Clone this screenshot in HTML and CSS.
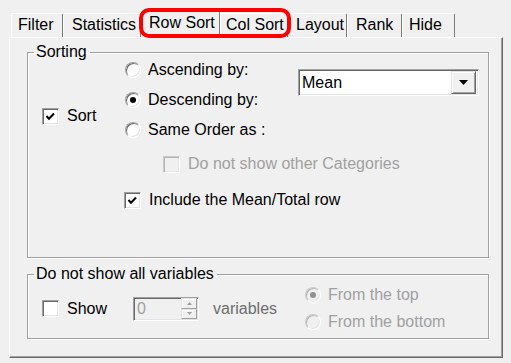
FILE: index.html
```html
<!DOCTYPE html>
<html lang="en">
<head>
    <meta charset="UTF-8">
    <title>Row Sort</title>
    <link rel="stylesheet" href="styles.css">
</head>
<body>
    <div class="dialog">
        <div class="tabs">
            <div class="tab tab-filter">Filter</div>
            <div class="tab tab-stats">Statistics</div>
            <div class="tab tab-row selected">Row Sort</div>
            <div class="tab tab-col">Col Sort</div>
            <div class="tab tab-layout">Layout</div>
            <div class="tab tab-rank">Rank</div>
            <div class="tab tab-hide">Hide</div>
            <div class="highlight"></div>
        </div>

        <div class="panel">
            <fieldset class="group group-sorting">
                <legend>Sorting</legend>
                <div class="sort-top">
                    <div class="sort-left">
                        <div class="option">
                            <span class="checkbox"><svg viewBox="0 0 11 11" width="11" height="11"><polyline points="1.5,5 4,7.8 9,2.5" fill="none" stroke="#000" stroke-width="2"/></svg></span>
                            Sort
                        </div>
                    </div>
                    <div class="sort-options">
                        <div class="option"><span class="radio"></span>Ascending by:</div>
                        <div class="option"><span class="radio checked"></span>Descending by:</div>
                        <div class="option"><span class="radio"></span>Same Order as :</div>
                    </div>
                    <div class="combo">
                        <span class="combo-text">Mean</span>
                        <span class="combo-button"><svg viewBox="0 0 9 5" width="9" height="5"><polygon points="0,0 9,0 4.5,5" fill="#000"/></svg></span>
                    </div>
                </div>
                <div class="option sub-option disabled">
                    <span class="checkbox"></span>Do not show other Categories
                </div>
                <div class="option include-option">
                    <span class="checkbox"><svg viewBox="0 0 11 11" width="11" height="11"><polyline points="1.5,5 4,7.8 9,2.5" fill="none" stroke="#000" stroke-width="2"/></svg></span>
                    Include the Mean/Total row
                </div>
            </fieldset>

            <fieldset class="group group-vars">
                <legend>Do not show all variables</legend>
                <div class="vars-row">
                    <div class="vars-left">
                        <div class="option"><span class="checkbox"></span>Show</div>
                    </div>
                    <div class="spinner">
                        <span class="spinner-text">0</span>
                        <span class="spin-buttons">
                            <span class="spin-btn"><svg viewBox="0 0 5 3" width="5" height="3"><polygon points="0,3 5,3 2.5,0" fill="#a0a0a0"/></svg></span>
                            <span class="spin-btn"><svg viewBox="0 0 5 3" width="5" height="3"><polygon points="0,0 5,0 2.5,3" fill="#a0a0a0"/></svg></span>
                        </span>
                    </div>
                    <span class="vars-label">variables</span>
                    <div class="vars-options">
                        <div class="option disabled"><span class="radio checked"></span>From the top</div>
                        <div class="option disabled"><span class="radio"></span>From the bottom</div>
                    </div>
                </div>
            </fieldset>
        </div>
    </div>
</body>
</html>
```

FILE: styles.css
```css
* {
    margin: 0;
    padding: 0;
    box-sizing: border-box;
}

body {
    background: #f0f0f0;
    font-family: 'Liberation Sans', Arial, sans-serif;
    font-size: 16px;
    color: #000;
}

/* Tab strip */
.tabs {
    position: relative;
    display: flex;
    align-items: flex-end;
    height: 37px;
    padding-left: 11px;
}

.tab {
    height: 24px;
    padding: 2px 0 0 7px;
    line-height: 18px;
    border-top: 1px solid #fff;
    border-left: 1px solid #fff;
    border-right: 1px solid #7a7a7a;
    border-radius: 2px 2px 0 0;
    white-space: nowrap;
}

.tab.selected {
    position: relative;
    z-index: 1;
    height: 27px;
    margin-bottom: -1px;
    background: #f0f0f0;
}

.tab-filter { width: 52px; padding-left: 6px; }
.tab-stats { width: 78px; padding-left: 8px; }
.tab-row { width: 79px; }
.tab-col { width: 68px; padding-left: 5px; }
.tab-layout { width: 59px; }
.tab-rank { width: 55px; padding-left: 8px; }
.tab-hide { width: 53px; padding-left: 6px; }

/* red annotation round Row Sort / Col Sort */
.highlight {
    position: absolute;
    left: 139px;
    top: 8px;
    width: 152px;
    height: 30px;
    border: 4px solid #f00;
    border-radius: 10px;
    z-index: 2;
}

/* Tab page */
.panel {
    margin-left: 9px;
    width: 494px;
    height: 321px;
    padding: 5px 0 0 17px;
    border-top: 1px solid #fff;
    border-left: 1px solid #fff;
    border-right: 1px solid #696969;
    border-bottom: 1px solid #696969;
    box-shadow: inset -1px -1px 0 #a0a0a0;
}

.group {
    width: 462px;
    border: 1px solid #a0a0a0;
    box-shadow: inset 1px 1px 0 #fff, 1px 1px 0 #fff;
}

.group legend {
    margin-left: 6px;
    padding: 0 3px 0 2px;
    line-height: 18px;
}

.group-sorting {
    height: 215px;
}

.group-vars {
    height: 74px;
    margin-top: 7px;
}

/* Options: checkbox / radio with label */
.option {
    display: flex;
    align-items: center;
    gap: 8px;
    height: 18px;
    line-height: 18px;
    white-space: nowrap;
}

.option.disabled {
    color: #a0a0a0;
}

.checkbox {
    display: flex;
    align-items: center;
    justify-content: center;
    width: 17px;
    height: 17px;
    background: #fff;
    border: 1px solid;
    border-color: #a0a0a0 #fff #fff #a0a0a0;
    box-shadow: inset 1px 1px 0 #696969, inset -1px -1px 0 #e3e3e3;
    flex-shrink: 0;
}

.disabled .checkbox {
    background: #f0f0f0;
    border-color: #c8c8c8 #fff #fff #c8c8c8;
    box-shadow: inset 1px 1px 0 #b4b4b4, inset -1px -1px 0 #e3e3e3;
}

.radio {
    position: relative;
    width: 16px;
    height: 16px;
    border-radius: 50%;
    background: #fff;
    border: 1px solid;
    border-color: #a0a0a0 #fff #fff #a0a0a0;
    box-shadow: inset 1px 1px 0 #696969, inset -1px -1px 0 #e3e3e3;
    flex-shrink: 0;
}

.radio.checked::after {
    content: '';
    position: absolute;
    left: 4px;
    top: 4px;
    width: 6px;
    height: 6px;
    border-radius: 50%;
    background: #000;
}

.disabled .radio {
    background: #f0f0f0;
    border-color: #c8c8c8 #fff #fff #c8c8c8;
    box-shadow: inset 1px 1px 0 #b4b4b4, inset -1px -1px 0 #e3e3e3;
}

.disabled .radio.checked::after {
    background: #909090;
}

/* Sorting group */
.sort-top {
    display: flex;
    align-items: flex-start;
}

.sort-left {
    width: 97px;
    padding: 46px 0 0 14px;
}

.sort-options {
    display: flex;
    flex-direction: column;
    gap: 12px;
    width: 173px;
}

.sort-options .option {
    gap: 7px;
}

.combo {
    display: flex;
    align-items: center;
    justify-content: space-between;
    width: 181px;
    height: 27px;
    margin-top: 8px;
    background: #fff;
    border: 1px solid;
    border-color: #a0a0a0 #fff #fff #a0a0a0;
    box-shadow: inset 1px 1px 0 #696969, inset -1px -1px 0 #e3e3e3;
    padding: 2px 2px 2px 3px;
}

.combo-button {
    display: flex;
    align-items: center;
    justify-content: center;
    width: 25px;
    height: 23px;
    background: #f0f0f0;
    border: 1px solid;
    border-color: #e3e3e3 #696969 #696969 #e3e3e3;
    box-shadow: inset 1px 1px 0 #fff, inset -1px -1px 0 #a0a0a0;
}

.sub-option {
    margin: 16px 0 0 135px;
}

.include-option {
    margin: 18px 0 0 96px;
}

/* Variables group */
.vars-row {
    display: flex;
    align-items: center;
    padding-top: 3px;
}

.vars-left {
    width: 105px;
    padding-left: 14px;
}

.spinner {
    display: flex;
    align-items: center;
    justify-content: space-between;
    width: 66px;
    height: 24px;
    background: #f0f0f0;
    border: 1px solid;
    border-color: #a0a0a0 #fff #fff #a0a0a0;
    box-shadow: inset 1px 1px 0 #696969, inset -1px -1px 0 #e3e3e3;
    padding: 1px 1px 1px 3px;
    color: #a0a0a0;
}

.spin-buttons {
    display: flex;
    flex-direction: column;
    width: 16px;
    height: 21px;
}

.spin-btn {
    display: flex;
    align-items: center;
    justify-content: center;
    flex: 1;
    border: 1px solid;
    border-color: #e3e3e3 #a0a0a0 #a0a0a0 #e3e3e3;
    box-shadow: inset 1px 1px 0 #fff;
}

.vars-label {
    width: 106px;
    padding-left: 14px;
    color: #6d6d6d;
}

.vars-options {
    display: flex;
    flex-direction: column;
    gap: 9px;
}

.vars-options .option {
    gap: 7px;
}
```
